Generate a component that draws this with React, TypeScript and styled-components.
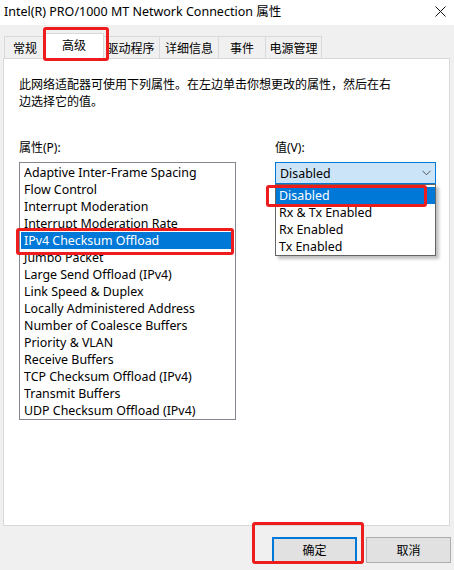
import React from "react";
import styled, { createGlobalStyle } from "styled-components";

const GlobalStyle = createGlobalStyle`
  html, body {
    margin: 0;
    padding: 0;
    background: #f0f0f0;
  }
  body {
    font-family: "Noto Sans", "Noto Sans CJK SC", sans-serif;
    font-size: 12px;
    color: #000;
  }
`;

const tabs = [
  { label: "常规", width: 42 },
  { label: "高级", width: 56, active: true },
  { label: "驱动程序", width: 59 },
  { label: "详细信息", width: 60 },
  { label: "事件", width: 48 },
  { label: "电源管理", width: 57 },
];

const properties = [
  "Adaptive Inter-Frame Spacing",
  "Flow Control",
  "Interrupt Moderation",
  "Interrupt Moderation Rate",
  "IPv4 Checksum Offload",
  "Jumbo Packet",
  "Large Send Offload (IPv4)",
  "Link Speed & Duplex",
  "Locally Administered Address",
  "Number of Coalesce Buffers",
  "Priority & VLAN",
  "Receive Buffers",
  "TCP Checksum Offload (IPv4)",
  "Transmit Buffers",
  "UDP Checksum Offload (IPv4)",
];

const values = ["Disabled", "Rx & Tx Enabled", "Rx Enabled", "Tx Enabled"];

export default function App() {
  return (
    <>
      <GlobalStyle />
      <Window>
        <TitleBar>
          <Title>Intel(R) PRO/1000 MT Network Connection 属性</Title>
          <CloseButton>
            <svg width="11" height="11" viewBox="0 0 11 11">
              <path d="M0.5 0.5 L10.5 10.5 M10.5 0.5 L0.5 10.5" stroke="#111" strokeWidth="1" />
            </svg>
          </CloseButton>
        </TitleBar>

        <TabStrip>
          {tabs.map((t) => (
            <Tab key={t.label} $width={t.width} $active={!!t.active}>
              {t.label}
              {t.active && <Mark $top={-7} $right={-6} $bottom={-2} $left={-2} />}
            </Tab>
          ))}
        </TabStrip>

        <Panel>
          <Description>
            此网络适配器可使用下列属性。在左边单击你想更改的属性，然后在右边选择它的值。
          </Description>

          <Columns>
            <Column>
              <FieldLabel>属性(P):</FieldLabel>
              <ListBox>
                {properties.map((p, i) => (
                  <ListItem key={p} $selected={i === 4}>
                    {p}
                    {i === 4 && <Mark $top={-4} $right={-2} $bottom={-6} $left={-5} />}
                  </ListItem>
                ))}
              </ListBox>
            </Column>

            <Column>
              <FieldLabel>值(V):</FieldLabel>
              <ComboWrap>
                <Combo>
                  <span>Disabled</span>
                  <svg width="9" height="6" viewBox="0 0 9 6">
                    <path d="M0.5 0.8 L4.5 4.8 L8.5 0.8" fill="none" stroke="#555" strokeWidth="1" />
                  </svg>
                </Combo>
                <DropList>
                  {values.map((v, i) => (
                    <DropItem key={v} $selected={i === 0}>
                      {v}
                      {i === 0 && <Mark $top={-2} $right={8} $bottom={-3} $left={-10} />}
                    </DropItem>
                  ))}
                </DropList>
              </ComboWrap>
            </Column>
          </Columns>
        </Panel>

        <Footer>
          <Button $primary>
            确定
            <Mark $top={-17} $right={-9} $bottom={-3} $left={-22} />
          </Button>
          <Button>取消</Button>
        </Footer>
      </Window>
    </>
  );
}

const Window = styled.div`
  width: 454px;
  height: 570px;
  display: flex;
  flex-direction: column;
  background: #f0f0f0;
  overflow: hidden;
`;

const TitleBar = styled.div`
  height: 25px;
  flex: none;
  background: #fff;
  display: flex;
  align-items: center;
  padding-left: 4px;
  padding-bottom: 5px;
  box-sizing: border-box;
`;

const Title = styled.div`
  flex: 1;
  font-size: 12.5px;
  white-space: nowrap;
`;

const CloseButton = styled.div`
  width: 28px;
  display: flex;
  justify-content: center;
  padding-top: 2px;
`;

const TabStrip = styled.div`
  display: flex;
  align-items: flex-end;
  height: 26px;
  margin-top: 8px;
  padding-left: 4px;
  position: relative;
  z-index: 2;
`;

const Tab = styled.div<{ $width: number; $active: boolean }>`
  position: relative;
  box-sizing: border-box;
  width: ${(p) => (p.$active ? p.$width + 4 : p.$width)}px;
  height: ${(p) => (p.$active ? 26 : 23)}px;
  border: 1px solid #d9d9d9;
  border-bottom: ${(p) => (p.$active ? "none" : "1px solid #d9d9d9")};
  margin-left: ${(p) => (p.$active ? -2 : -1)}px;
  margin-right: ${(p) => (p.$active ? -2 : 0)}px;
  background: ${(p) => (p.$active ? "#fff" : "#f0f0f0")};
  z-index: ${(p) => (p.$active ? 2 : 1)};
  display: flex;
  align-items: center;
  justify-content: center;
  padding-bottom: ${(p) => (p.$active ? 3 : 0)}px;
  font-size: 12px;
  white-space: nowrap;
  &:first-child {
    margin-left: 0;
  }
`;

const Mark = styled.div<{ $top: number; $right: number; $bottom: number; $left: number }>`
  position: absolute;
  top: ${(p) => p.$top}px;
  right: ${(p) => p.$right}px;
  bottom: ${(p) => p.$bottom}px;
  left: ${(p) => p.$left}px;
  border: 3px solid #ee1c1c;
  border-radius: 3px;
  pointer-events: none;
  z-index: 5;
`;

const Panel = styled.div`
  box-sizing: border-box;
  margin: -1px 4px 0 3px;
  height: 468px;
  background: #fff;
  border: 1px solid #d9d9d9;
  padding: 17px 15px 0 15px;
  position: relative;
  z-index: 1;
`;

const Description = styled.div`
  width: 378px;
  line-height: 17px;
`;

const Columns = styled.div`
  display: grid;
  grid-template-columns: 217px 161px;
  column-gap: 39px;
  margin-top: 29px;
`;

const Column = styled.div`
  display: flex;
  flex-direction: column;
`;

const FieldLabel = styled.div`
  line-height: 17px;
  margin-bottom: 6px;
`;

const ListBox = styled.div`
  box-sizing: border-box;
  height: 258px;
  border: 1px solid #828790;
  padding: 1px 3px 0 1px;
  background: #fff;
`;

const ListItem = styled.div<{ $selected?: boolean }>`
  position: relative;
  height: 17px;
  line-height: 17px;
  padding-left: 3px;
  font-size: 12.4px;
  white-space: nowrap;
  background: ${(p) => (p.$selected ? "#0078d7" : "transparent")};
  color: ${(p) => (p.$selected ? "#fff" : "#000")};
`;

const ComboWrap = styled.div`
  position: relative;
`;

const Combo = styled.div`
  box-sizing: border-box;
  height: 22px;
  border: 1px solid #0078d7;
  background: #cce4f7;
  display: flex;
  align-items: center;
  justify-content: space-between;
  padding: 0 4px 0 4px;
  font-size: 12.4px;
`;

const DropList = styled.div`
  position: absolute;
  top: 22px;
  left: 0;
  right: 0;
  box-sizing: border-box;
  height: 72px;
  border: 1px solid #646464;
  background: #fff;
  padding: 2px 0 0 0;
  box-shadow: 3px 3px 3px rgba(0, 0, 0, 0.25);
  z-index: 4;
`;

const DropItem = styled.div<{ $selected?: boolean }>`
  position: relative;
  height: 17px;
  line-height: 17px;
  padding-left: 3px;
  font-size: 12.4px;
  background: ${(p) => (p.$selected ? "#0078d7" : "transparent")};
  color: ${(p) => (p.$selected ? "#fff" : "#000")};
`;

const Footer = styled.div`
  display: flex;
  justify-content: flex-end;
  gap: 9px;
  padding: 11px 3px 0 0;
`;

const Button = styled.div<{ $primary?: boolean }>`
  position: relative;
  box-sizing: border-box;
  width: 85px;
  height: 26px;
  background: #e1e1e1;
  border: ${(p) => (p.$primary ? "2px solid #0078d7" : "1px solid #adadad")};
  display: flex;
  align-items: center;
  justify-content: center;
  font-size: 12px;
`;
